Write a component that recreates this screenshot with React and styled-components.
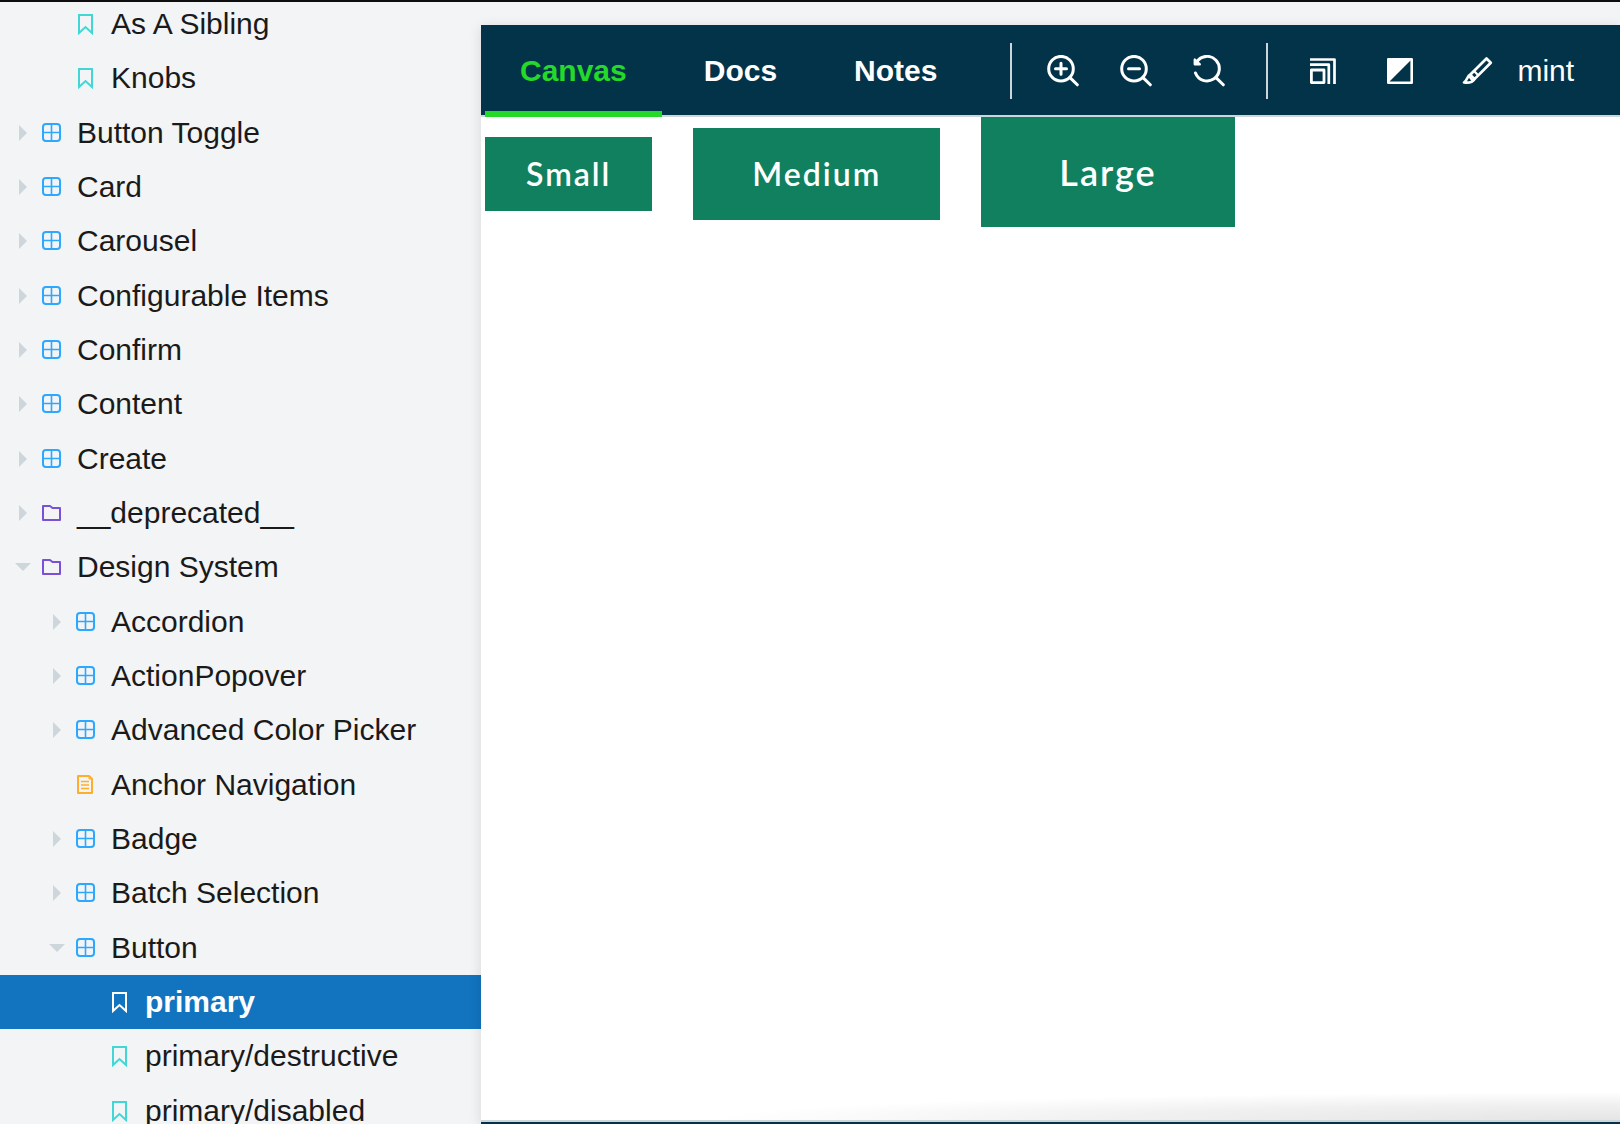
import React, { useState } from "react";
import styled, { createGlobalStyle, css } from "styled-components";

const color = {
  side: "#f2f4f5",
  bar: "#033349",
  line: "#ccd6db",
  active: "#24d929",
  button: "#11805f",
  selected: "#1274bf",
  story: "#42d6d4",
  component: "#2ea7ff",
  group: "#7a50d8",
  document: "#ffae2b",
  text: "#1a1a1a",
};

const GlobalStyle = createGlobalStyle`
  *, *::before, *::after { box-sizing: border-box; }
  body {
    margin: 0;
    overflow: hidden;
    background: ${color.side};
    color: ${color.text};
    font-family: "Liberation Sans", Arial, sans-serif;
    font-size: 30px;
  }
  button { font: inherit; border: 0; padding: 0; background: none; cursor: pointer; }
`;

const Shell = styled.div`
  display: flex;
  height: 100vh;
  overflow: hidden;
  border-top: 2px solid #0d0d0d;
`;

const Sidebar = styled.nav`
  flex: 0 0 481px;
  overflow: hidden;
`;

const Tree = styled.ul`
  display: grid;
  grid-auto-rows: 1fr;
  min-height: calc(100vh + 17px);
  margin: -5px 0 0;
  padding: 0;
  list-style: none;
`;

const TreeItem = styled.li`
  display: flex;
  min-height: 54px;
`;

const TreeLink = styled.a`
  display: flex;
  flex: 1;
  align-items: center;
  padding-left: ${({ $level }) => 15 + $level * 34}px;
  color: inherit;
  text-decoration: none;
  white-space: nowrap;
  ${({ $selected }) =>
    $selected &&
    css`
      background: ${color.selected};
      color: #fff;
      font-weight: 700;
    `}
`;

const Arrow = styled.svg`
  flex: none;
  width: 16px;
  height: 16px;
  margin-right: 11px;
  fill: ${color.line};
`;

const KindIcon = styled.svg`
  flex: none;
  width: 20px;
  height: 22px;
  margin-right: 15px;
  fill: none;
  stroke: ${({ $tint }) => $tint};
  stroke-width: 2;
`;

const Main = styled.main`
  display: flex;
  flex: 1;
  flex-direction: column;
  min-width: 0;
  margin-top: 23px;
  background: #fff;
  box-shadow: 0 2px 12px rgba(0, 0, 0, 0.12);
`;

const Toolbar = styled.header`
  display: flex;
  flex: none;
  align-items: stretch;
  height: 92px;
  padding-left: 4px;
  background: ${color.bar};
  box-shadow: inset 0 -2px ${color.line};
  color: #fff;
`;

const Tabs = styled.div`
  display: flex;
  gap: 7px;
`;

const Tab = styled.button`
  padding: 0 35px;
  border-top: 6px solid transparent;
  border-bottom: 6px solid ${({ $active }) => ($active ? color.active : "transparent")};
  color: ${({ $active }) => ($active ? color.active : "#fff")};
  font-weight: 700;
`;

const Divider = styled.span`
  align-self: center;
  width: 2px;
  height: 56px;
  margin-left: ${({ $space }) => $space}px;
  background: ${color.line};
`;

const Tools = styled.div`
  display: flex;
  align-items: center;
  gap: ${({ $gap }) => $gap}px;
  margin-left: ${({ $space }) => $space}px;
`;

const Tool = styled.button`
  display: flex;
  flex: none;
  align-items: center;
  gap: 24px;
  color: #fff;
`;

const ToolIcon = styled.svg`
  width: 32px;
  height: 32px;
  fill: none;
  stroke: currentColor;
  stroke-width: 3;
`;

const Preview = styled.section`
  display: flex;
  flex: 1;
  align-items: baseline;
  gap: 41px;
  padding-left: 4px;
  background: radial-gradient(
    ellipse 80% 28px at 100% 100%,
    rgba(0, 0, 0, 0.1),
    rgba(0, 0, 0, 0.06) 55%,
    transparent
  );
`;

const sizes = {
  small: css`height: 74px; padding: 0 41px; font-size: 32px;`,
  medium: css`height: 92px; padding: 0 59px; font-size: 32px;`,
  large: css`height: 110px; padding: 0 78px; font-size: 36px;`,
};

const PrimaryButton = styled.button`
  && {
    ${({ $size }) => sizes[$size]}
    background: ${color.button};
    color: #fff;
    font-family: Lato, sans-serif;
    font-weight: 600;
    letter-spacing: 2px;
  }
`;

const AddonPanel = styled.footer`
  flex: none;
  height: 4px;
  border-top: 2px solid ${color.line};
  background: ${color.bar};
`;

const kinds = {
  story: {
    tint: color.story,
    shape: <path d="M3 2h13v18l-6.500-6L3 20z" />,
  },
  component: {
    tint: color.component,
    shape: (
      <>
        <rect x="1" y="2" width="17" height="17" rx="3" />
        <path d="M9.500 2v17M1 10.500h17" strokeWidth="1.600" />
      </>
    ),
  },
  group: {
    tint: color.group,
    shape: <path d="M1 4h7l2.500 2H18v12H1z" strokeLinejoin="round" />,
  },
  document: {
    tint: color.document,
    shape: (
      <>
        <path d="M2 2h11l3 3v14H2z" strokeLinejoin="round" />
        <path d="M13 2v3h3z" strokeWidth="1" />
        <path d="M5 7.500h8M5 11h8M5 14.500h8" strokeWidth="1.600" />
      </>
    ),
  },
};

const items = [
  [1, "story", "As A Sibling"],
  [1, "story", "Knobs"],
  [0, "component", "Button Toggle"],
  [0, "component", "Card"],
  [0, "component", "Carousel"],
  [0, "component", "Configurable Items"],
  [0, "component", "Confirm"],
  [0, "component", "Content"],
  [0, "component", "Create"],
  [0, "group", "__deprecated__"],
  [0, "group", "Design System", true],
  [1, "component", "Accordion"],
  [1, "component", "ActionPopover"],
  [1, "component", "Advanced Color Picker"],
  [1, "document", "Anchor Navigation"],
  [1, "component", "Badge"],
  [1, "component", "Batch Selection"],
  [1, "component", "Button", true],
  [2, "story", "primary"],
  [2, "story", "primary/destructive"],
  [2, "story", "primary/disabled"],
];

function TreeRow({ level, kind, label, open, selected, onSelect }) {
  const { tint, shape } = kinds[kind];
  const expandable = kind === "component" || kind === "group";
  return (
    <TreeItem>
      <TreeLink
        href={`#${encodeURIComponent(label)}`}
        $level={level}
        $selected={selected}
        aria-current={selected ? "page" : undefined}
        aria-expanded={expandable ? Boolean(open) : undefined}
        onClick={onSelect}
      >
        <Arrow viewBox="0 0 16 16" aria-hidden="true">
          {expandable && <path d={open ? "M0 4h16l-8 8z" : "M4 0v16l8-8z"} />}
        </Arrow>
        <KindIcon viewBox="0 0 20 22" $tint={selected ? "#fff" : tint} aria-hidden="true">
          {shape}
        </KindIcon>
        {label}
      </TreeLink>
    </TreeItem>
  );
}

const lens = (
  <>
    <circle cx="14" cy="13.700" r="12.300" />
    <path d="M23 22.600l7.300 7.200" strokeLinecap="round" />
  </>
);

export default function App() {
  const [tab, setTab] = useState("Canvas");
  const [story, setStory] = useState("primary");
  return (
    <>
      <GlobalStyle />
      <Shell>
        <Sidebar aria-label="Stories">
          <Tree>
            {items.map(([level, kind, label, open]) => (
              <TreeRow
                key={label}
                level={level}
                kind={kind}
                label={label}
                open={open}
                selected={story === label}
                onSelect={() => kind === "story" && setStory(label)}
              />
            ))}
          </Tree>
        </Sidebar>
        <Main>
          <Toolbar>
            <Tabs role="tablist">
              {["Canvas", "Docs", "Notes"].map((name) => (
                <Tab
                  key={name}
                  role="tab"
                  aria-selected={tab === name}
                  $active={tab === name}
                  onClick={() => setTab(name)}
                >
                  {name}
                </Tab>
              ))}
            </Tabs>
            <Divider $space={38} />
            <Tools $space={35} $gap={41}>
              <Tool aria-label="Zoom in">
                <ToolIcon viewBox="0 0 32 32">
                  {lens}
                  <path d="M8.500 13.700h11M14 8.200v11" strokeLinecap="round" />
                </ToolIcon>
              </Tool>
              <Tool aria-label="Zoom out">
                <ToolIcon viewBox="0 0 32 32">
                  {lens}
                  <path d="M8.500 13.700h11" strokeLinecap="round" />
                </ToolIcon>
              </Tool>
              <Tool aria-label="Reset zoom">
                <ToolIcon viewBox="0 0 32 32" strokeLinecap="round" strokeLinejoin="round">
                  <path d="M2.500 18A12.300 12.300 0 1 0 4 6.500" />
                  <path d="M1.800 4.500v4.800h5z" fill="currentColor" strokeWidth="2.400" />
                  <path d="M23 22.600l7.300 7.200" />
                </ToolIcon>
              </Tool>
            </Tools>
            <Divider $space={41} />
            <Tools $space={39} $gap={45}>
              <Tool aria-label="Change viewport">
                <ToolIcon viewBox="0 0 32 32" strokeLinejoin="round">
                  <path d="M3 4.500h24.500V29M3 9.700h18.800V29" strokeWidth="2.700" />
                  <rect x="4.400" y="15" width="12.600" height="12.600" strokeWidth="2.800" />
                </ToolIcon>
              </Tool>
              <Tool aria-label="Change background">
                <ToolIcon viewBox="0 0 32 32" strokeLinejoin="round">
                  <rect x="4.300" y="4.300" width="23.400" height="23.400" strokeWidth="2.600" />
                  <path d="M4 4h24L4 28z" fill="currentColor" stroke="none" />
                </ToolIcon>
              </Tool>
              <Tool>
                <ToolIcon viewBox="0 0 32 32" strokeLinejoin="round" aria-hidden="true">
                  <path d="M25.500 3.500l4.300 4.300-16.300 16.300-4.300-4.300z" strokeWidth="2.700" />
                  <path
                    d="M9.200 19.800c-3.200 1.200-2.200 4.700-6.200 7.700 4 .5 8.500.2 10.500-3.400"
                    strokeWidth="2.700"
                  />
                  <path d="M13 16l4.500 4.500M8 21l3.500 4.500" strokeWidth="2.200" />
                </ToolIcon>
                mint
              </Tool>
            </Tools>
          </Toolbar>
          <Preview aria-label="Preview">
            <PrimaryButton $size="small">Small</PrimaryButton>
            <PrimaryButton $size="medium">Medium</PrimaryButton>
            <PrimaryButton $size="large">Large</PrimaryButton>
          </Preview>
          <AddonPanel aria-label="Addons" />
        </Main>
      </Shell>
    </>
  );
}
